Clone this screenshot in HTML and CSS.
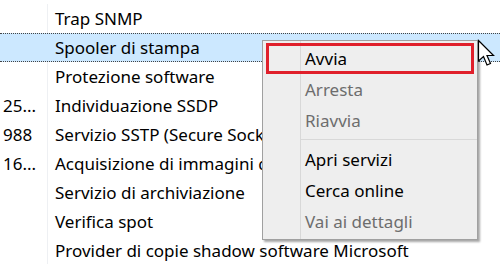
FILE: index.html
```html
<!DOCTYPE html>
<html lang="it">
<head>
    <meta charset="UTF-8">
    <meta name="viewport" content="width=device-width, initial-scale=1.0">
    <title>Servizi</title>
    <link rel="stylesheet" href="styles.css">
</head>
<body>

<div class="list">
    <div class="row"><span class="pid"></span><span class="name">Trap SNMP</span></div>
    <div class="row selected"><span class="pid"></span><span class="name">Spooler di stampa</span></div>
    <div class="row"><span class="pid"></span><span class="name">Protezione software</span></div>
    <div class="row"><span class="pid">25...</span><span class="name">Individuazione SSDP</span></div>
    <div class="row"><span class="pid">988</span><span class="name">Servizio SSTP (Secure Socket Tunneling Protocol)</span></div>
    <div class="row"><span class="pid">16...</span><span class="name">Acquisizione di immagini di Windows (WIA)</span></div>
    <div class="row"><span class="pid"></span><span class="name">Servizio di archiviazione</span></div>
    <div class="row"><span class="pid"></span><span class="name">Verifica spot</span></div>
    <div class="row"><span class="pid"></span><span class="name">Provider di copie shadow software Microsoft</span></div>
</div>

<!-- context menu over the list -->
<div class="menu">
    <div class="item marked">Avvia</div>
    <div class="item disabled">Arresta</div>
    <div class="item disabled">Riavvia</div>
    <div class="separator"></div>
    <div class="item">Apri servizi</div>
    <div class="item">Cerca online</div>
    <div class="item disabled">Vai ai dettagli</div>
</div>

<svg class="cursor" width="20" height="30" viewBox="0 0 20 30">
    <path d="M1.5 1.5 L1.5 22 L6.5 17.5 L10 26 L13.5 24.5 L10 16.5 L16.5 16.5 Z" fill="#fff" stroke="#000" stroke-width="1.2" stroke-linejoin="miter"/>
</svg>

</body>
</html>
```

FILE: styles.css
```css
body {
    margin: 0;
    padding: 4px 0 0 0;
    background-color: #fff;
    font-family: "Noto Sans", "Open Sans", sans-serif;
    font-size: 17px;
    color: #000;
    overflow: hidden;
}

.list {
    display: flex;
    flex-direction: column;
}

.row {
    display: flex;
    height: 29px;
    align-items: center;
    white-space: nowrap;
    box-sizing: border-box;
}

.pid {
    flex: 0 0 48px;
    box-sizing: border-box;
    height: 100%;
    display: flex;
    align-items: center;
    padding-left: 3px;
    border-right: 1px solid #eef0f3;
}

.name {
    padding-left: 7px;
}

.row.selected {
    background-color: #cce8ff;
    border-top: 1px dotted #444;
    border-bottom: 1px dotted #444;
}

.row.selected .pid {
    border-right-color: transparent;
}

.menu {
    position: absolute;
    left: 262px;
    top: 40px;
    width: 214px;
    padding: 2px 0;
    background-color: #eeeeee;
    background-image: linear-gradient(to right, transparent 37px, #d8d8d8 37px, #d8d8d8 38px, transparent 38px);
    border: 1px solid #a0a0a0;
    box-shadow: 2px 2px 2px rgba(0, 0, 0, 0.35);
}

.item {
    height: 31px;
    line-height: 31px;
    padding-left: 42px;
    white-space: nowrap;
}

.item.disabled {
    color: #6d6d6d;
}

.item.marked {
    margin: 0 3px;
    padding-left: 39px;
    outline: 3px solid #e0202b;
    outline-offset: -3px;
}

.separator {
    height: 1px;
    margin: 3px 0 4px 38px;
    background-color: #d8d8d8;
}

.cursor {
    position: absolute;
    left: 477px;
    top: 39px;
}
```
